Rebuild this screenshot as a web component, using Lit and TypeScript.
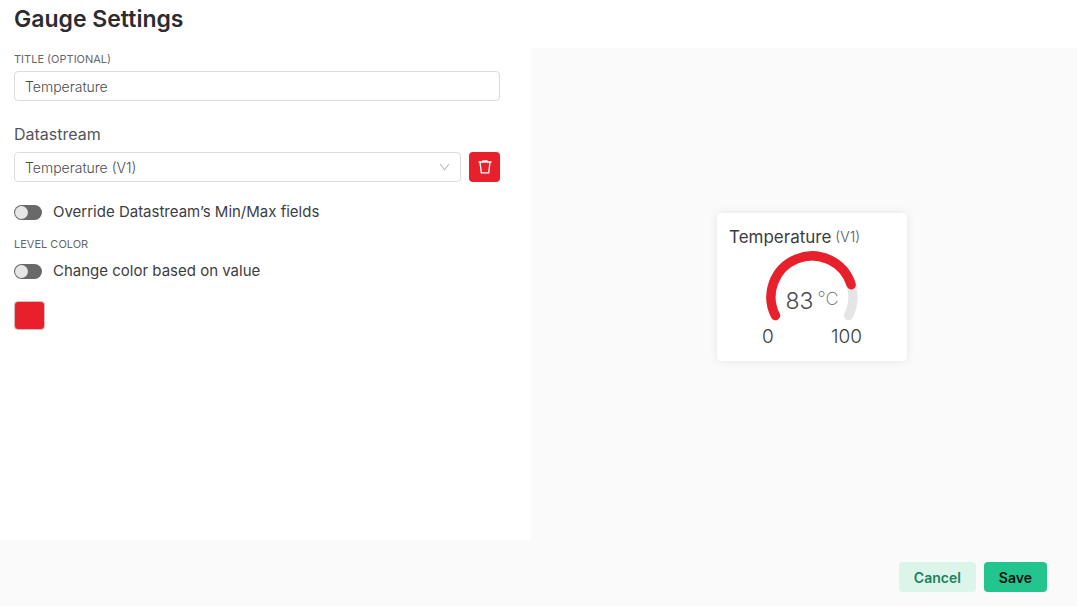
import { LitElement, html, css, svg } from "lit";
import { customElement, property, state } from "lit/decorators.js";

const START = 153;
const SWEEP = 234;

@customElement("gauge-card")
class GaugeCard extends LitElement {
  @property() name = "";
  @property() pin = "";
  @property() unit = "";
  @property({ type: Number }) value = 0;
  @property({ type: Number }) level = 0;
  @property({ type: Number }) min = 0;
  @property({ type: Number }) max = 100;

  static styles = css`
    :host {
      display: block;
      box-sizing: border-box;
      width: 190px;
      padding: 12px 12px 11px;
      border-radius: 4px;
      background: #fff;
      box-shadow: 0 0 8px rgba(0, 0, 0, 0.09);
      color: #3c3d42;
    }
    .heading {
      display: flex;
      align-items: center;
      gap: 4px;
      margin: 0;
      font-size: 17px;
      font-weight: 400;
      line-height: 24px;
      white-space: nowrap;
    }
    .pin {
      font-size: 14px;
      font-weight: 300;
      color: #55565a;
    }
    .dial {
      display: grid;
      justify-items: center;
      margin-top: 2px;
    }
    .arc,
    .reading {
      grid-area: 1 / 1;
    }
    .arc {
      display: block;
    }
    .reading {
      display: flex;
      align-items: flex-start;
      gap: 4px;
      padding-top: 36px;
      line-height: 28px;
      font-size: 23px;
      font-weight: 300;
      color: #4a4b50;
    }
    .unit {
      font-size: 18px;
      font-weight: 200;
      line-height: 23px;
      color: #66676b;
    }
    .range {
      display: flex;
      justify-content: space-between;
      width: 100px;
      margin: 3px auto 0;
      font-size: 19px;
      font-weight: 300;
      line-height: 26px;
    }
  `;

  private point(fraction: number) {
    const a = ((START + SWEEP * fraction) * Math.PI) / 180;
    return [46 + 41 * Math.cos(a), 46 + 41 * Math.sin(a)].map((n) => n.toFixed(2));
  }

  private arc(fraction: number, color: string) {
    const [x1, y1] = this.point(0);
    const [x2, y2] = this.point(fraction);
    const large = SWEEP * fraction > 180 ? 1 : 0;
    return svg`<path d="M${x1} ${y1}A41 41 0 ${large} 1 ${x2} ${y2}" fill="none"
      stroke=${color} stroke-width="9.4" stroke-linecap="round" />`;
  }

  render() {
    const fraction = (this.level - this.min) / (this.max - this.min);
    return html`
      <h2 class="heading">${this.name} <span class="pin">${this.pin}</span></h2>
      <div class="dial">
        <svg class="arc" width="92" height="70" viewBox="0 0 92 70" aria-hidden="true">
          ${this.arc(1, "#e5e5e5")} ${this.arc(fraction, "#e8202c")}
        </svg>
        <div class="reading"><span>${this.value}</span><span class="unit">${this.unit}</span></div>
      </div>
      <div class="range"><span>${this.min}</span><span>${this.max}</span></div>
    `;
  }
}

@customElement("app-root")
class AppRoot extends LitElement {
  @state() private name = "Temperature";

  static styles = css`
    :host {
      display: grid;
      grid-template-rows: 48px 1fr 66px;
      min-height: 100vh;
      background: #fff;
      color: #3c3d42;
      font-family: Inter, "Liberation Sans", sans-serif;
      font-size: 15px;
    }
    * {
      box-sizing: border-box;
    }
    button,
    input,
    select {
      margin: 0;
      font: inherit;
    }
    .header {
      padding: 4px 14px;
    }
    .title {
      margin: 0;
      font-size: 23px;
      font-weight: 600;
      line-height: 30px;
      color: #2b2b30;
    }
    .body {
      display: grid;
      grid-template-columns: 531fr 546fr;
    }
    .form {
      display: flex;
      flex-direction: column;
      padding: 0 31px 0 14px;
    }
    .caption {
      font-size: 11px;
      font-weight: 400;
      line-height: 16px;
      color: #66676b;
    }
    .form > .caption:first-child {
      margin: 3px 0 4px;
    }
    .field {
      width: 100%;
      height: 30px;
      padding: 0 10px;
      border: 1px solid #dcdcde;
      border-radius: 4px;
      background: #fff;
      font-size: 14px;
      font-weight: 300;
      color: #4b4c50;
    }
    .label {
      margin: 23px 0 8px;
      font-size: 16px;
      line-height: 20px;
      color: #55565a;
    }
    .row {
      display: flex;
      gap: 8px;
    }
    .picker {
      display: grid;
      flex: 1;
      align-items: center;
    }
    .picker > * {
      grid-area: 1 / 1;
    }
    .picker select {
      appearance: none;
    }
    .chevron {
      justify-self: end;
      margin-right: 11px;
      pointer-events: none;
    }
    .remove {
      display: grid;
      place-items: center;
      width: 31px;
      height: 30px;
      padding: 0;
      border: 0;
      border-radius: 4px;
      background: #e8202c;
    }
    .toggle {
      display: flex;
      align-items: center;
      gap: 11px;
      font-size: 15px;
      line-height: 20px;
    }
    .row + .toggle {
      margin: 20px 0 14px;
    }
    .caption + .toggle {
      margin: 9px 0 20px;
    }
    .switch {
      appearance: none;
      display: flex;
      width: 28px;
      height: 15px;
      padding: 1px;
      border-radius: 8px;
      background: #69696a;
    }
    .switch::before {
      content: "";
      width: 13px;
      height: 13px;
      border-radius: 50%;
      background: #e6e6e6;
    }
    .switch:checked {
      justify-content: flex-end;
      background: #24c48e;
    }
    .swatch {
      width: 31px;
      height: 29px;
      padding: 0;
      border: 1px solid #dfb9bc;
      border-radius: 4px;
      background: #e8202c;
    }
    .preview {
      display: grid;
      place-items: center;
      padding: 0 0 14px 16px;
      background: #fafafa;
    }
    .footer {
      display: flex;
      align-items: flex-start;
      justify-content: flex-end;
      gap: 8px;
      padding: 22px 30px 14px;
      background: #fafafa;
    }
    .action {
      height: 30px;
      padding: 0 15px;
      border: 0;
      border-radius: 4px;
      font-size: 14px;
      font-weight: 600;
    }
    .cancel {
      background: #dbf5eb;
      color: #20805f;
    }
    .save {
      background: #24c48e;
      color: #07120e;
    }
  `;

  render() {
    return html`
      <header class="header"><h1 class="title">Gauge Settings</h1></header>
      <main class="body">
        <section class="form">
          <label class="caption" for="title">TITLE (OPTIONAL)</label>
          <input
            class="field"
            id="title"
            type="text"
            .value=${this.name}
            @input=${(e: Event) => (this.name = (e.target as HTMLInputElement).value)}
          />
          <label class="label" for="stream">Datastream</label>
          <div class="row">
            <div class="picker">
              <select class="field" id="stream">
                <option>Temperature (V1)</option>
              </select>
              <svg class="chevron" width="11" height="8" viewBox="0 0 11 8" aria-hidden="true">
                <path d="M1 1L5.5 6.8L10 1" fill="none" stroke="#bbbbbd" stroke-width="1.1" />
              </svg>
            </div>
            <button class="remove" type="button" aria-label="Remove datastream">
              <svg width="14" height="14" viewBox="0 0 14 14" aria-hidden="true">
                <path
                  d="M0.5 2H13.5M5 1.7V0.8H9V1.7M2 2.2L3.3 12.9H10.7L12 2.2"
                  fill="none"
                  stroke="#fff"
                  stroke-width="1.3"
                />
              </svg>
            </button>
          </div>
          <label class="toggle">
            <input class="switch" type="checkbox" role="switch" />
            Override Datastream’s Min/Max fields
          </label>
          <div class="caption">LEVEL COLOR</div>
          <label class="toggle">
            <input class="switch" type="checkbox" role="switch" />
            Change color based on value
          </label>
          <button class="swatch" type="button" aria-label="Level color"></button>
        </section>
        <section class="preview">
          <gauge-card .name=${this.name} pin="(V1)" unit="°C" .value=${83} .level=${81}></gauge-card>
        </section>
      </main>
      <footer class="footer">
        <button class="action cancel" type="button">Cancel</button>
        <button class="action save" type="button">Save</button>
      </footer>
    `;
  }
}
